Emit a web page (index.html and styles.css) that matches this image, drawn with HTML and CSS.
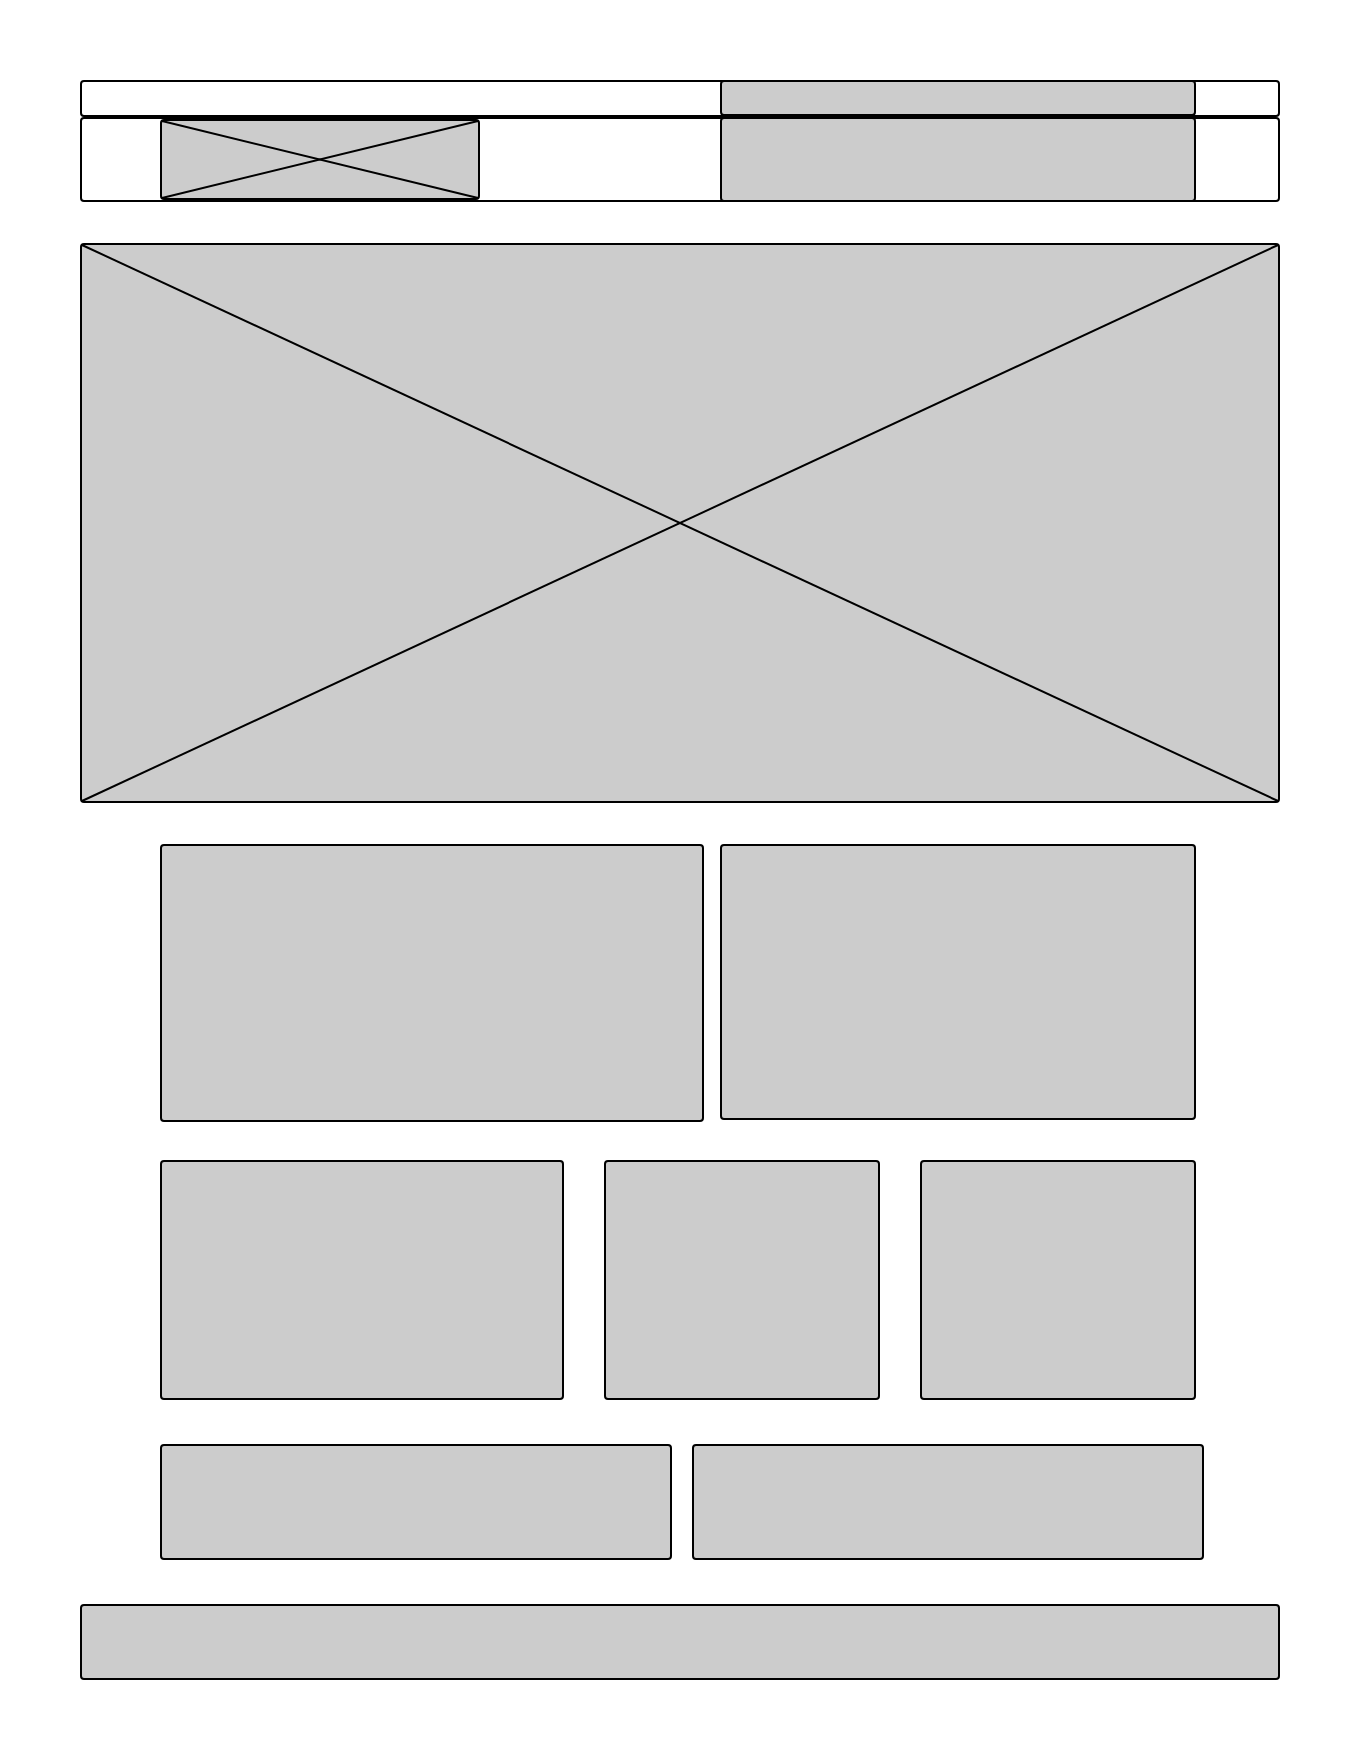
FILE: index.html
```html
<!DOCTYPE html>
<html lang="en">

<head>
    <meta charset="UTF-8">
    <meta name="viewport" content="width=device-width, initial-scale=1.0">
    <title>Wireframe</title>
    <link rel="stylesheet" href="styles.css">
</head>

<body>
    <div class="page">
        <!-- Header -->
        <div class="header">
            <div class="header-row top-row">
                <div class="block nav-block"></div>
            </div>
            <div class="header-row main-row">
                <div class="block logo-block">
                    <svg class="cross" viewBox="0 0 100 100" preserveAspectRatio="none">
                        <line x1="0" y1="0" x2="100" y2="100" />
                        <line x1="100" y1="0" x2="0" y2="100" />
                    </svg>
                </div>
                <div class="block menu-block"></div>
            </div>
        </div>

        <!-- Hero image -->
        <div class="block hero">
            <svg class="cross" viewBox="0 0 100 100" preserveAspectRatio="none">
                <line x1="0" y1="0" x2="100" y2="100" />
                <line x1="100" y1="0" x2="0" y2="100" />
            </svg>
        </div>

        <div class="section two-up">
            <div class="block card-wide"></div>
            <div class="block card-side"></div>
        </div>

        <div class="section three-up">
            <div class="block card-a"></div>
            <div class="block card-b"></div>
            <div class="block card-c"></div>
        </div>

        <div class="section halves">
            <div class="block half"></div>
            <div class="block half"></div>
        </div>

        <div class="block footer"></div>
    </div>
</body>

</html>
```

FILE: styles.css
```css
* {
  box-sizing: border-box;
}

body {
  margin: 0;
  background: #fff;
  font-family: "Liberation Sans", Arial, sans-serif;
}

.page {
  width: 1360px;
  padding: 80px 80px 80px 80px;
}

.block {
  position: relative;
  background: #ccc;
  border: 2px solid #000;
  border-radius: 4px;
}

.cross {
  position: absolute;
  inset: 0;
  width: 100%;
  height: 100%;
  overflow: visible;
}

.cross line {
  stroke: #000;
  stroke-width: 2;
  vector-effect: non-scaling-stroke;
}

/* Header */
.header-row {
  display: flex;
  align-items: stretch;
  background: #fff;
  border: 2px solid #000;
  border-radius: 4px;
}

.top-row {
  height: 37px;
}

.main-row {
  height: 85px;
  padding-left: 78px;
}

.nav-block {
  width: 476px;
  margin: -2px 82px -1px auto;
}

.logo-block {
  width: 320px;
  height: 81px;
}

.menu-block {
  width: 476px;
  margin: -2px 82px -2px auto;
}

.hero {
  height: 560px;
  margin-top: 41px;
}

/* Content sections */
.section {
  display: flex;
  align-items: flex-start;
  padding-left: 80px;
}

.two-up {
  margin-top: 41px;
  gap: 16px;
}

.card-wide {
  width: 544px;
  height: 278px;
}

.card-side {
  width: 476px;
  height: 276px;
}

.three-up {
  margin-top: 38px;
  gap: 40px;
}

.card-a {
  width: 404px;
  height: 240px;
}

.card-b,
.card-c {
  width: 276px;
  height: 240px;
}

.halves {
  margin-top: 44px;
  gap: 20px;
}

.half {
  width: 512px;
  height: 116px;
  flex-shrink: 0;
}

.footer {
  height: 76px;
  margin-top: 44px;
}
```
